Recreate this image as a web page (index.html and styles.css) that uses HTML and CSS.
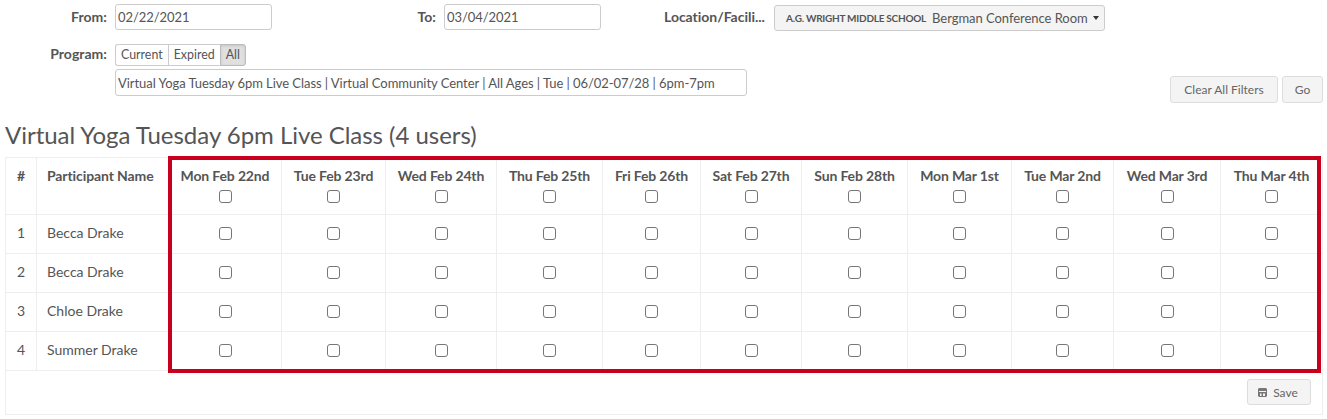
FILE: index.html
```html
<!DOCTYPE html>
<html lang="en">
<head>
<meta charset="utf-8">
<title>Attendance</title>
<link rel="stylesheet" href="styles.css">
</head>
<body>
<form class="filters">
  <div class="filter-row date-row">
    <div class="field field-from">
      <label class="label">From:</label>
      <input class="input date-input" type="text" value="02/22/2021">
    </div>
    <div class="field field-to">
      <label class="label">To:</label>
      <input class="input date-input" type="text" value="03/04/2021">
    </div>
    <div class="field field-location">
      <label class="label label-location">Location/Facili...</label>
      <button class="select-btn" type="button">
        <span class="select-small">A.G. WRIGHT MIDDLE SCHOOL</span>
        <span class="select-main">Bergman Conference Room</span>
        <span class="caret"></span>
      </button>
    </div>
  </div>
  <div class="filter-row program-row">
    <label class="label program-label">Program:</label>
    <div class="program-controls">
      <div class="btn-group">
        <button class="seg" type="button">Current</button>
        <button class="seg" type="button">Expired</button>
        <button class="seg seg-active" type="button">All</button>
      </div>
      <input class="input program-input" type="text" value="Virtual Yoga Tuesday 6pm Live Class | Virtual Community Center | All Ages | Tue | 06/02-07/28 | 6pm-7pm">
    </div>
    <div class="actions">
      <button class="btn btn-clear" type="button">Clear All Filters</button>
      <button class="btn btn-go" type="button">Go</button>
    </div>
  </div>
</form>
<h1 class="title">Virtual Yoga Tuesday 6pm Live Class (4 users)</h1>
<div class="table-wrap">
  <table class="grid">
    <colgroup>
      <col><col><col><col><col><col><col><col><col><col><col><col><col>
    </colgroup>
    <thead>
      <tr>
        <th class="num">#</th>
        <th class="name">Participant Name</th>
        <th>Mon Feb 22nd<input type="checkbox" class="check"></th>
        <th>Tue Feb 23rd<input type="checkbox" class="check"></th>
        <th>Wed Feb 24th<input type="checkbox" class="check"></th>
        <th>Thu Feb 25th<input type="checkbox" class="check"></th>
        <th>Fri Feb 26th<input type="checkbox" class="check"></th>
        <th>Sat Feb 27th<input type="checkbox" class="check"></th>
        <th>Sun Feb 28th<input type="checkbox" class="check"></th>
        <th>Mon Mar 1st<input type="checkbox" class="check"></th>
        <th>Tue Mar 2nd<input type="checkbox" class="check"></th>
        <th>Wed Mar 3rd<input type="checkbox" class="check"></th>
        <th>Thu Mar 4th<input type="checkbox" class="check"></th>
      </tr>
    </thead>
    <tbody>
      <tr>
        <td class="num">1</td><td class="name">Becca Drake</td>
        <td><input type="checkbox" class="check"></td><td><input type="checkbox" class="check"></td><td><input type="checkbox" class="check"></td><td><input type="checkbox" class="check"></td><td><input type="checkbox" class="check"></td><td><input type="checkbox" class="check"></td><td><input type="checkbox" class="check"></td><td><input type="checkbox" class="check"></td><td><input type="checkbox" class="check"></td><td><input type="checkbox" class="check"></td><td><input type="checkbox" class="check"></td>
      </tr>
      <tr>
        <td class="num">2</td><td class="name">Becca Drake</td>
        <td><input type="checkbox" class="check"></td><td><input type="checkbox" class="check"></td><td><input type="checkbox" class="check"></td><td><input type="checkbox" class="check"></td><td><input type="checkbox" class="check"></td><td><input type="checkbox" class="check"></td><td><input type="checkbox" class="check"></td><td><input type="checkbox" class="check"></td><td><input type="checkbox" class="check"></td><td><input type="checkbox" class="check"></td><td><input type="checkbox" class="check"></td>
      </tr>
      <tr>
        <td class="num">3</td><td class="name">Chloe Drake</td>
        <td><input type="checkbox" class="check"></td><td><input type="checkbox" class="check"></td><td><input type="checkbox" class="check"></td><td><input type="checkbox" class="check"></td><td><input type="checkbox" class="check"></td><td><input type="checkbox" class="check"></td><td><input type="checkbox" class="check"></td><td><input type="checkbox" class="check"></td><td><input type="checkbox" class="check"></td><td><input type="checkbox" class="check"></td><td><input type="checkbox" class="check"></td>
      </tr>
      <tr>
        <td class="num">4</td><td class="name">Summer Drake</td>
        <td><input type="checkbox" class="check"></td><td><input type="checkbox" class="check"></td><td><input type="checkbox" class="check"></td><td><input type="checkbox" class="check"></td><td><input type="checkbox" class="check"></td><td><input type="checkbox" class="check"></td><td><input type="checkbox" class="check"></td><td><input type="checkbox" class="check"></td><td><input type="checkbox" class="check"></td><td><input type="checkbox" class="check"></td><td><input type="checkbox" class="check"></td>
      </tr>
    </tbody>
  </table>
  <div class="table-footer">
    <button class="btn btn-save" type="button">
      <svg class="save-icon" width="9" height="9" viewBox="0 0 9 9"><path fill="#777" fill-rule="evenodd" d="M1 0h7l1 1v7l-1 1H1L0 8V1zM1 3v1h7V3zM2 5.500V8h1.500V5.500zM5 5.500V8h2V5.500z"/></svg>
      <span>Save</span>
    </button>
  </div>
  <div class="highlight"></div>
</div>
</body>
</html>
```
FILE: styles.css
```css
* {
  box-sizing: border-box;
}
html, body {
  margin: 0;
  padding: 0;
}
body {
  width: 1327px;
  height: 419px;
  overflow: hidden;
  background: #fff;
  font-family: Lato, "Open Sans", sans-serif;
  font-size: 13px;
  color: #555;
}
button, input {
  font-family: inherit;
  margin: 0;
}
.filters {
  padding-top: 4px;
  height: 119px;
}
.filter-row {
  display: flex;
}
.date-row {
  height: 40px;
}
.field {
  display: flex;
  align-items: flex-start;
}
.field-from { width: 329px; }
.field-to { width: 330px; }
.label {
  display: block;
  font-weight: 700;
  font-size: 14px;
  line-height: 26px;
  color: #555;
  text-align: right;
  letter-spacing: 0.03px;
}
.field-from .label,
.field-to .label,
.program-label {
  width: 107px;
  margin-right: 8px;
  flex: none;
}
.label-location {
  box-sizing: content-box;
  width: 79px;
  margin-left: 5px;
  padding-right: 31px;
  white-space: nowrap;
  text-align: left;
  letter-spacing: -0.03px;
}
.input {
  height: 26px;
  border: 1px solid #ccc;
  border-radius: 3px;
  background: #fff;
  padding: 0 2px;
  font-size: 13px;
  letter-spacing: -0.05px;
  color: #555;
  outline: none;
}
.date-input {
  width: 157px;
}
.select-btn {
  display: flex;
  align-items: center;
  width: 331px;
  height: 26px;
  margin-top: 1px;
  padding: 0 4px 0 11px;
  border: 1px solid #ccc;
  border-radius: 3px;
  background: #f4f4f4;
  color: #555;
  white-space: nowrap;
}
.select-small {
  font-size: 10px;
  font-weight: 700;
  letter-spacing: -0.25px;
  margin-right: 6px;
}
.select-main {
  font-size: 13px;
  letter-spacing: -0.04px;
}
.caret {
  width: 0;
  height: 0;
  margin-left: 5px;
  border-left: 3.5px solid transparent;
  border-right: 3.5px solid transparent;
  border-top: 4px solid #333;
}
.program-row {
  align-items: flex-start;
}
.program-label {
  line-height: 20px;
}
.program-controls {
  width: 632px;
}
.btn-group {
  display: flex;
  height: 22px;
  margin-bottom: 3px;
}
.seg {
  height: 22px;
  padding: 0 5px 1px;
  border: 1px solid #ccc;
  border-right-width: 0;
  background: #fff;
  font-size: 12.4px;
  color: #555;
}
.seg:first-child {
  border-radius: 3px 0 0 3px;
}
.seg-active {
  background: #e0e0e0;
  border-color: #bbb;
  border-right-width: 1px;
  border-radius: 0 3px 3px 0;
  box-shadow: inset 0 1px 3px rgba(0, 0, 0, 0.12);
}
.program-input {
  display: block;
  width: 632px;
  height: 27px;
}
.actions {
  display: flex;
  gap: 4px;
  margin-left: 423px;
  margin-top: 32px;
}
.btn {
  height: 27px;
  border: 1px solid #ddd;
  border-radius: 3px;
  background: #f4f4f4;
  font-size: 12px;
  color: #666;
  padding: 0;
}
.btn-clear { width: 108px; }
.btn-go { width: 41px; }
.title {
  margin: 0 0 7px 5px;
  height: 31px;
  font-size: 24px;
  line-height: 31px;
  font-weight: 400;
  letter-spacing: -0.03px;
  color: #555;
}
.table-wrap {
  position: relative;
  width: 1318px;
  margin-left: 5px;
}
.grid {
  width: 1317px;
  table-layout: fixed;
  border-collapse: collapse;
}
col:nth-child(1) { width: 31px; }
col:nth-child(2) { width: 132px; }
col:nth-child(3) { width: 113px; }
col:nth-child(4) { width: 104px; }
col:nth-child(5) { width: 111px; }
col:nth-child(6) { width: 106px; }
col:nth-child(7) { width: 98px; }
col:nth-child(8) { width: 101px; }
col:nth-child(9) { width: 106px; }
col:nth-child(10) { width: 104px; }
col:nth-child(11) { width: 102px; }
col:nth-child(12) { width: 107px; }
col:nth-child(13) { width: 102px; }
th, td {
  border: 1px solid #eee;
  text-align: center;
  padding: 0;
  color: #555;
  font-size: 14px;
}
th {
  height: 57px;
  vertical-align: top;
  font-weight: 700;
  padding-top: 9px;
  line-height: 18px;
  letter-spacing: -0.15px;
  white-space: nowrap;
}
th.name {
  letter-spacing: -0.1px;
}
td {
  height: 39px;
  padding-bottom: 2px;
}
td.num, td.name {
  padding-bottom: 4px;
}
th.name, td.name {
  text-align: left;
  padding-left: 10px;
}
.check {
  display: block;
  width: 13px;
  height: 13px;
  margin: 0 auto;
  appearance: none;
  border: 1px solid #767676;
  border-radius: 3px;
  background: #fff;
}
th .check {
  margin-top: 5px;
}
.table-footer {
  display: flex;
  justify-content: flex-end;
  height: 44px;
  padding: 8px 11px 0 0;
  border: 1px solid #eee;
  border-top: 0;
}
.btn-save {
  display: flex;
  align-items: center;
  justify-content: center;
  gap: 6px;
  width: 64px;
  height: 26px;
  padding-right: 2px;
}
.save-icon {
  flex: none;
}
.highlight {
  position: absolute;
  left: 163px;
  top: -1px;
  width: 1153px;
  height: 217px;
  border: 4px solid #c8001e;
  pointer-events: none;
}
```
